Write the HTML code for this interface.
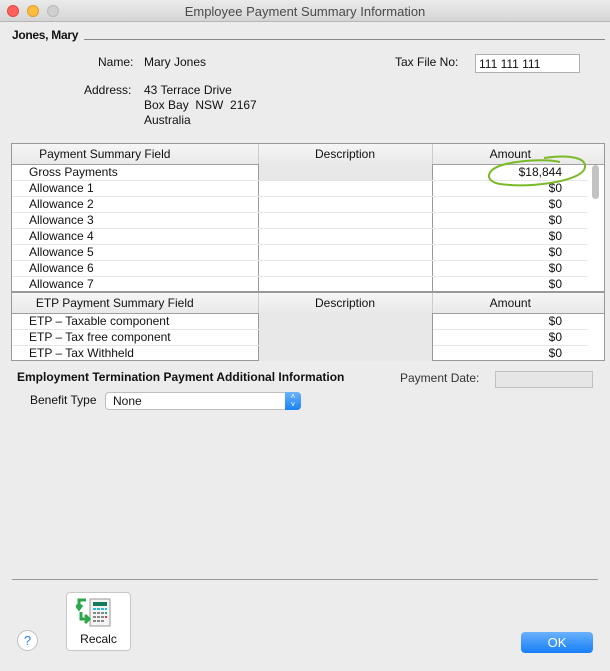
<!DOCTYPE html>
<html><head><style>
*{margin:0;padding:0;box-sizing:border-box}
body{width:610px;height:671px;background:#ececec;font-family:"Liberation Sans",sans-serif;font-size:12px;color:#111;position:relative;overflow:hidden}
.a{position:absolute;white-space:nowrap}
.title{left:0;top:0;width:610px;height:22px;background:linear-gradient(#ebebeb,#d5d5d5);border-bottom:1px solid #b5b5b5}
.dot{position:absolute;top:5px;width:12px;height:12px;border-radius:50%}
table{border-collapse:collapse;position:absolute;font-size:12px;table-layout:fixed}
td{height:16px;border-bottom:1px solid #e6e6e6;padding:0}
.h td{height:20px;background:linear-gradient(#f6f6f6,#e9e9e9);border-bottom:1px solid #a0a0a0;text-align:center}
.f{padding-left:17px;border-right:1px solid #999}
.d{border-right:1px solid #999}
.m{text-align:right;padding-right:26px}
</style></head><body>
<div class="a title"></div>
<div class="dot" style="left:7px;background:#fc605b;border:1px solid #de4a44"></div>
<div class="dot" style="left:27px;background:#fdbc40;border:1px solid #dd9e2a"></div>
<div class="dot" style="left:47px;background:#d0d0d0;border:1px solid #b8b8b8"></div>
<div class="a" style="left:0;width:610px;top:4px;text-align:center;font-size:13px;color:#4a4a4a">Employee Payment Summary Information</div>

<div class="a" style="left:12px;top:28px;font-weight:bold;letter-spacing:-0.3px">Jones, Mary</div>
<div class="a" style="left:84px;top:39px;width:521px;border-top:1px solid #888"></div>
<div class="a" style="left:98px;top:55px">Name:</div>
<div class="a" style="left:144px;top:55px">Mary Jones</div>
<div class="a" style="left:395px;top:55px">Tax File No:</div>
<div class="a" style="left:475px;top:54px;width:105px;height:19px;background:#fff;border:1px solid #b0b0b0;padding:2px 3px">111 111 111</div>
<div class="a" style="left:84px;top:83px">Address:</div>
<div class="a" style="left:144px;top:83px;line-height:15px">43 Terrace Drive<br>Box Bay&nbsp; NSW&nbsp; 2167<br>Australia</div>

<div class="a" style="left:11px;top:143px;width:594px;height:218px;border:1px solid #999;background:#fff"></div>
<table style="left:12px;top:144px;width:592px">
<tr class="h"><td style="width:246px;border-right:1px solid #ccc;padding-right:60px">Payment Summary Field</td><td style="width:174px;border-right:1px solid #ccc">Description</td><td style="width:172px;padding-right:16px">Amount</td></tr>
</table>
<table style="left:12px;top:164px;width:576px">
<tr><td class="f" style="width:246px">Gross Payments</td><td class="d" style="width:174px;background:#e8e8e8"></td><td class="m">$18,844</td></tr>
<tr><td class="f">Allowance 1</td><td class="d"></td><td class="m">$0</td></tr>
<tr><td class="f">Allowance 2</td><td class="d"></td><td class="m">$0</td></tr>
<tr><td class="f">Allowance 3</td><td class="d"></td><td class="m">$0</td></tr>
<tr><td class="f">Allowance 4</td><td class="d"></td><td class="m">$0</td></tr>
<tr><td class="f">Allowance 5</td><td class="d"></td><td class="m">$0</td></tr>
<tr><td class="f">Allowance 6</td><td class="d"></td><td class="m">$0</td></tr>
<tr><td class="f" style="border-bottom:none">Allowance 7</td><td class="d" style="border-bottom:none"></td><td class="m" style="border-bottom:none">$0</td></tr>
</table>
<div class="a" style="left:592px;top:165px;width:7px;height:34px;border-radius:4px;background:#c2c2c2"></div>
<div class="a" style="left:12px;top:291px;width:592px;border-top:2px solid #999"></div>
<table style="left:12px;top:293px;width:592px">
<tr class="h"><td style="width:246px;border-right:1px solid #ccc;padding-right:40px">ETP Payment Summary Field</td><td style="width:174px;border-right:1px solid #ccc">Description</td><td style="width:172px;padding-right:16px">Amount</td></tr>
</table>
<table style="left:12px;top:313px;width:576px">
<tr><td class="f" style="width:246px">ETP – Taxable component</td><td class="d" style="width:174px;background:#e8e8e8;border-bottom:none" rowspan="3"></td><td class="m">$0</td></tr>
<tr><td class="f">ETP – Tax free component</td><td class="m">$0</td></tr>
<tr><td class="f" style="border-bottom:none">ETP – Tax Withheld</td><td class="m" style="border-bottom:none">$0</td></tr>
</table>
<svg class="a" style="left:480px;top:150px" width="110" height="45"><path d="M64 8 C90 4 110 8 104 20 C96 32 50 38 20 34 C4 31 6 20 22 15 C40 10 66 9 80 12" fill="none" stroke="#7ab928" stroke-width="2"/></svg>

<div class="a" style="left:17px;top:370px;font-weight:bold">Employment Termination Payment Additional Information</div>
<div class="a" style="left:400px;top:371px;color:#333">Payment Date:</div>
<div class="a" style="left:495px;top:371px;width:98px;height:17px;background:#e6e6e6;border:1px solid #c0c0c0"></div>
<div class="a" style="left:30px;top:393px">Benefit Type</div>
<div class="a" style="left:105px;top:392px;width:196px;height:18px;background:#fff;border:1px solid #bdbdbd;border-radius:4px;padding:1px 7px">None</div>
<div class="a" style="left:285px;top:392px;width:16px;height:18px;background:linear-gradient(#6cb3fa,#1a82f5);border-radius:0 4px 4px 0;color:#fff;font-size:8px;text-align:center;line-height:8px;padding-top:1px">˄<br>˅</div>

<div class="a" style="left:12px;top:579px;width:586px;border-top:1px solid #999"></div>
<div class="a" style="left:66px;top:592px;width:65px;height:59px;background:#fff;border:1px solid #c8c8c8;border-radius:4px"></div>
<svg class="a" style="left:76px;top:597px" width="40" height="32">
<rect x="14" y="2" width="20" height="27" fill="#f3f3f3" stroke="#999"/>
<rect x="17" y="5" width="14" height="4" fill="#137a5e"/>
<g fill="#2cb8d8"><rect x="17" y="11" width="3" height="2"/><rect x="21" y="11" width="3" height="2"/><rect x="25" y="11" width="3" height="2"/><rect x="29" y="11" width="2" height="2"/></g>
<g fill="#888"><rect x="17" y="15" width="3" height="2"/><rect x="21" y="15" width="3" height="2"/><rect x="25" y="15" width="3" height="2"/><rect x="17" y="19" width="3" height="2"/><rect x="21" y="19" width="3" height="2"/><rect x="25" y="19" width="3" height="2"/><rect x="17" y="23" width="3" height="2"/><rect x="21" y="23" width="3" height="2"/><rect x="25" y="23" width="3" height="2"/></g>
<rect x="29" y="19" width="2" height="2" fill="#d33"/><rect x="29" y="15" width="2" height="2" fill="#2a8"/>
<path d="M10 3 L3 3 L3 10 M0 8 L3 12 L6 8" fill="none" stroke="#2aa84a" stroke-width="3"/>
<path d="M5 15 L5 22 L12 22 M9 18 L13 22 L9 26" fill="none" stroke="#2aa84a" stroke-width="3"/>
</svg>
<div class="a" style="left:66px;top:632px;width:65px;text-align:center">Recalc</div>
<div class="a" style="left:17px;top:630px;width:21px;height:21px;border-radius:50%;background:#fff;border:1px solid #c0c0c0;color:#2a7ff0;text-align:center;font-size:13px;line-height:19px">?</div>
<div class="a" style="left:521px;top:632px;width:72px;height:21px;border-radius:4px;background:linear-gradient(#6ab1fb,#167ef6);color:#fff;text-align:center;font-size:13px;line-height:21px">OK</div>
</body></html>
